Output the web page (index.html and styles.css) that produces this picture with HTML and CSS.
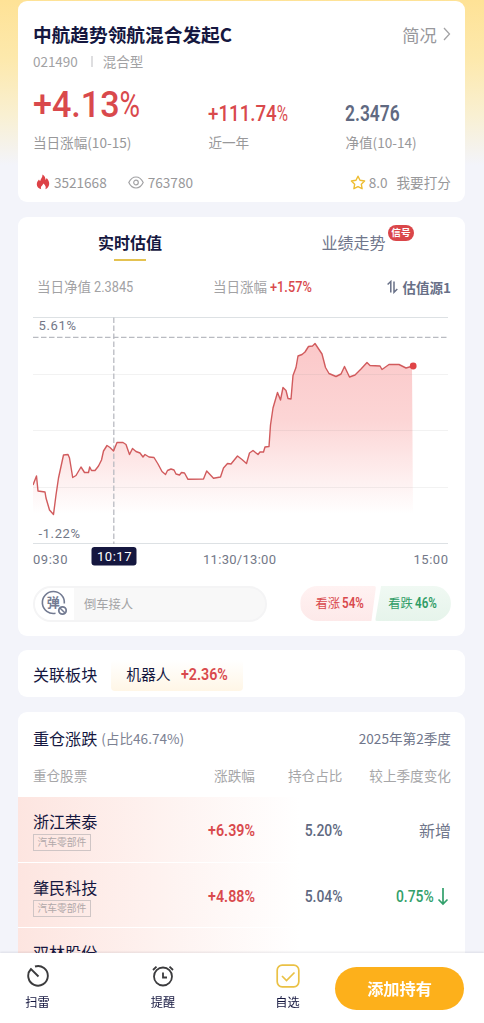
FILE: index.html
```html
<!DOCTYPE html>
<html lang="zh-CN">
<head>
<meta charset="utf-8">
<title>中航趋势领航混合发起C</title>
<link rel="stylesheet" href="styles.css">
</head>
<body>
<main class="page">
  <section class="card fund">
    <div class="fund-head"><h1>中航趋势领航混合发起C</h1>
      <a class="brief">简况<svg width="8" height="14" viewBox="0 0 8 14"><path d="M1 1l5.500 6L1 13" fill="none" stroke="#a3a3a5" stroke-width="1.300"/></svg></a></div>
    <div class="fund-meta"><span>021490</span><i></i><span>混合型</span></div>
    <div class="stats">
      <div><div class="val"><span class="din big red">+4.13<small>%</small></span></div><p>当日涨幅(10-15)</p></div>
      <div><div class="val"><span class="din mid red year">+111.74<small>%</small></span></div><p>近一年</p></div>
      <div><div class="val"><span class="din mid slate nav">2.3476</span></div><p>净值(10-14)</p></div>
    </div>
    <div class="counts">
      <svg class="fire" width="14" height="16" viewBox="0 0 14 16"><path d="M6.500.500C9 2 9.500 4 9.400 5.800C10.200 5.400 10.500 4.600 10.600 3.900C12.500 5.800 13.300 8 13.200 10C13 12.700 11.500 14.500 9.400 15.200C10.300 13.100 9.500 11.200 7.200 9.400C7 11.200 4.800 12 4.900 13.600C4.900 14.300 5 14.800 5.300 15.300C2.500 14.600.8 12.700.8 10.300C.8 8.200 2 6.700 3 5.500C3.300 6.300 3.600 6.800 4.200 7.100C4.600 4.800 6.700 3.400 6.500.5Z" fill="#dd4146"/></svg>
      <span>3521668</span>
      <svg class="eye" width="16" height="13" viewBox="0 0 16 13"><path d="M.8 6.500C2.500 3 5 1 8 1s5.500 2 7.200 5.500C13.500 10 11 12 8 12S2.500 10 .8 6.500Z" fill="none" stroke="#a2a2a4" stroke-width="1.200"/><circle cx="8" cy="6.500" r="2.300" fill="none" stroke="#a2a2a4" stroke-width="1.200"/></svg>
      <span>763780</span>
      <svg class="star" width="16" height="15" viewBox="0 0 16 15"><path d="M8 1.200l2 4.100 4.600.7-3.300 3.200.8 4.500L8 11.600l-4.100 2.100.8-4.500L1.400 6 6 5.300Z" fill="none" stroke="#eebd32" stroke-width="1.400" stroke-linejoin="round"/></svg>
      <span class="score">8.0</span><span>我要打分</span>
    </div>
  </section>

  <section class="card estimate">
    <nav class="tabs"><div class="active">实时估值</div><div>业绩走势<b class="badge">信号</b></div></nav>
    <div class="quote">
      <div>当日净值 <span class="din sm">2.3845</span></div>
      <div>当日涨幅 <span class="din sm red strong">+1.57%</span></div>
      <div class="source"><svg width="11" height="14" viewBox="0 0 11 14"><path d="M.6 4.500L3.800 1.500V12.500M7 1.500V12.300L10.300 9" fill="none" stroke="#687087" stroke-width="1.500"/></svg>估值源1</div>
    </div>
    <svg class="chart" width="420" height="256" viewBox="33 314 420 256">
      <defs><linearGradient id="fall" x1="0" y1="343" x2="0" y2="514" gradientUnits="userSpaceOnUse"><stop offset="0" stop-color="#fbc8c9"/><stop offset=".45" stop-color="#fcd5d5"/><stop offset="1" stop-color="#fff"/></linearGradient></defs>
      <path d="M33 485L36.500 476L38 491L45 492L46 498L49.500 510L53.500 514.500L56 495L58.500 478L63.500 455L68 454.500L69.500 458L72.700 477.500L76 475.500L81 467L84.500 472.500L88.500 472.500L89.700 467L91.500 470.500L95 470.500L98.500 466L101.500 460L103.500 451L107 445.500L110 447.500L113.500 451L117 442.500L123 442.500L126 444.500L129.500 454.500L132.500 448.500L136 451.500L140 453L143 457L145 454.500L149 457L154 457.500L158 464L162 471.500L165.500 474.500L167.500 470.500L171 469L174 470L176 474L179.500 475L181.500 472.500L184.500 473L188 479.300L203.500 479L206.700 471L213.500 478.300L220.500 477L223.500 468L227.500 463.500L231 464L237.500 456L242 459.500L246.500 463.500L249.500 453L253 450.500L258 454.500L260 452L263.500 452L265 447L269 446.500L270.500 425L273 408L277.500 392.500L280.500 400L283 387.500L286 390.500L288 398.500L291 399L293 375.500L296 367.500L298 356L302 354.500L305 352L308.500 346.500L312.500 346L315 343.500L319 349.500L322 354L325.500 367.500L329 373.500L336 376.500L341 374L344.500 366.500L349.500 377L355 375L361 369L367 362.500L370 365.500L380 366L382 369.500L389 364.500L399 364.500L406 368L412 366L413 514H33Z" fill="url(#fall)"/>
      <path d="M33 374.500H448M33 430.500H448M33 487.500H448" stroke="#808080" stroke-opacity=".1"/>
      <path d="M33 317.500H448M33 543.500H448" stroke="#dde1e4" stroke-width="1.200"/>
      <path d="M33 337.300H448" stroke="#b9bbc1" stroke-width="1.200" stroke-dasharray="5.500 2.500"/>
      <path d="M113.800 317.500V544" stroke="#b9bbc1" stroke-width="1.300" stroke-dasharray="5.500 2.500"/>
      <path d="M33 485L36.500 476L38 491L45 492L46 498L49.500 510L53.500 514.500L56 495L58.500 478L63.500 455L68 454.500L69.500 458L72.700 477.500L76 475.500L81 467L84.500 472.500L88.500 472.500L89.700 467L91.500 470.500L95 470.500L98.500 466L101.500 460L103.500 451L107 445.500L110 447.500L113.500 451L117 442.500L123 442.500L126 444.500L129.500 454.500L132.500 448.500L136 451.500L140 453L143 457L145 454.500L149 457L154 457.500L158 464L162 471.500L165.500 474.500L167.500 470.500L171 469L174 470L176 474L179.500 475L181.500 472.500L184.500 473L188 479.300L203.500 479L206.700 471L213.500 478.300L220.500 477L223.500 468L227.500 463.500L231 464L237.500 456L242 459.500L246.500 463.500L249.500 453L253 450.500L258 454.500L260 452L263.500 452L265 447L269 446.500L270.500 425L273 408L277.500 392.500L280.500 400L283 387.500L286 390.500L288 398.500L291 399L293 375.500L296 367.500L298 356L302 354.500L305 352L308.500 346.500L312.500 346L315 343.500L319 349.500L322 354L325.500 367.500L329 373.500L336 376.500L341 374L344.500 366.500L349.500 377L355 375L361 369L367 362.500L370 365.500L380 366L382 369.500L389 364.500L399 364.500L406 368L413 366" fill="none" stroke="#d15b5d" stroke-width="1.400" stroke-linejoin="round"/>
      <circle cx="413.200" cy="366" r="3.400" fill="#e04447"/>
      <rect x="91.500" y="547" width="45" height="18.500" rx="3" fill="#15173f"/>
      <g class="axis">
        <text x="38.500" y="330" textLength="37.500">5.61%</text><text x="38.500" y="538" textLength="41.500">-1.22%</text>
        <text x="33" y="564" textLength="34.500">09:30</text><text x="97" y="560.500" textLength="34.500" class="cursor">10:17</text>
        <text x="203" y="564" textLength="73">11:30/13:00</text><text x="413.500" y="564" textLength="34.500">15:00</text>
      </g>
    </svg>
    <div class="vote-row">
      <div class="comment"><span class="danmu"><svg width="28" height="26" viewBox="0 0 28 26"><path d="M23.300 13.500A11 11 0 1 0 14.500 23.300" fill="none" stroke="#737b92" stroke-width="1.600"/><text x="5.800" y="17">弹</text><circle cx="21.500" cy="20.500" r="3.700" fill="#fff" stroke="#737b92" stroke-width="1.800"/><path d="M19 18l5 5" stroke="#737b92" stroke-width="1.500"/></svg></span><span>倒车接人</span></div>
      <div class="votes">
        <div class="vote up">看涨<span class="din v">54%</span></div>
        <div class="vote down">看跌<span class="din v">46%</span></div>
      </div>
    </div>
  </section>

  <section class="card sector"><h2>关联板块</h2><div class="chip">机器人<span class="din row red">+2.36%</span></div></section>

  <section class="card holdings">
    <div class="hold-head"><h2>重仓涨跌</h2><span>(占比46.74%)</span><em>2025年第2季度</em></div>
    <div class="grid labels"><span>重仓股票</span><span>涨跌幅</span><span>持仓占比</span><span>较上季度变化</span></div>
    <div class="grid stock"><div class="name">浙江荣泰<small>汽车零部件</small></div><span class="din row right red">+6.39%</span><span class="din row right slate thin">5.20%</span><span class="change">新增</span></div>
    <div class="grid stock"><div class="name">肇民科技<small>汽车零部件</small></div><span class="din row right red">+4.88%</span><span class="din row right slate thin">5.04%</span><span class="change green"><span class="din row right thin">0.75%</span><svg width="12" height="19" viewBox="0 0 12 19"><path d="M6 1V17M1.500 12.500L6 17L10.500 12.500" fill="none" stroke="#32a06b" stroke-width="1.700"/></svg></span></div>
    <div class="grid stock"><div class="name">双林股份<small>汽车零部件</small></div></div>
  </section>
</main>

<footer class="bar">
  <a><svg width="24" height="24" viewBox="0 0 24 24" fill="none" stroke="#3b3b3d" stroke-width="1.900"><path d="M9 2.500A9.800 9.800 0 1 1 5 5L12.500 12.500"/></svg>扫雷</a>
  <a><svg width="24" height="24" viewBox="0 0 24 24" fill="none" stroke="#3b3b3d" stroke-width="1.800"><circle cx="12" cy="12.500" r="9"/><path d="M12 8.500V13.500H16M2 6L5.500 2.700M18.500 2.700L22 6"/></svg>提醒</a>
  <a><svg width="24" height="24" viewBox="0 0 24 24" fill="none" stroke="#eac145" stroke-width="1.700"><rect x="1.200" y="1.200" width="21.600" height="21.600" rx="5"/><path d="M6 12L10.500 16.500L18.500 8.500"/></svg>自选</a>
  <button>添加持有</button>
</footer>
</body>
</html>
```
FILE: styles.css
```css
* { box-sizing: border-box; }
body { margin: 0; height: 1023px; overflow: hidden; font-family: "Noto Sans CJK SC", sans-serif; color: #15173f; background: #f3f4fa; }
h1, h2, p { margin: 0; }
.page { height: 1023px; overflow: hidden; padding: 1px 18.400px 0; display: flex; flex-direction: column; gap: 14.500px;
  background: linear-gradient(#fee296 0, #fde9ad 60px, #f9f0d2 115px, #f3f4fa 165px); }
.card { flex: none; width: 447px; background: #fff; border-radius: 9px; padding: 0 14.500px; }
.red { color: #d9494c; } .slate { color: #606981; } .green { color: #32a06b; }

/* Condensed numerals */
.din { display: inline-block; font-family: Roboto, sans-serif; font-weight: 600; white-space: nowrap; transform: scaleX(.82); transform-origin: left center; }
.din small { font-size: 1em; font-weight: 400; display: inline-block; transform: scaleX(.82); transform-origin: left center; }
.big { font-size: 37.500px; font-weight: 500; line-height: 40px; transform: scaleX(.91); }
.mid { font-size: 21.500px; line-height: 24px; }
.year { font-weight: 500; transform: scaleX(.87); } .nav { transform: scaleX(.81); }
.sm { font-size: 14.500px; font-weight: 400; line-height: 20px; transform: scaleX(.88); }
.strong { font-weight: 500; }
.v { font-size: 15.500px; transform: scaleX(.75); }
.row { font-size: 17.200px; transform: scaleX(.83); }
.right { transform-origin: right center; }
.thin { font-weight: 500; transform: scaleX(.81); }

.fund { height: 201px; padding-top: 16px; }
.fund-head { display: flex; justify-content: space-between; height: 34px; align-items: center; }
h1 { font-size: 18.700px; font-weight: 600; line-height: 34px; }
.brief { display: flex; align-items: center; gap: 6px; font-size: 17.300px; color: #98989c; }
.fund-meta { display: flex; align-items: center; height: 20px; font-size: 13.500px; color: #a2a2a4; }
.fund-meta i { width: 2px; height: 11px; background: #dedee0; margin: 0 10px 0 13px; }
.stats { display: grid; grid-template-columns: 175.500px 137px 1fr; margin-top: 13px; }
.stats .val { height: 40px; display: flex; align-items: center; }
.stats .mid { margin-top: 20px; }
.stats p { font-size: 13.600px; line-height: 20px; margin-top: 8px; color: #98989a; white-space: nowrap; }
.counts { display: flex; align-items: center; height: 20px; margin-top: 20px; font-size: 13.600px; color: #98989a; }
.fire { margin: 0 4px 0 3px; } .eye { margin: 0 4px 0 21px; } .star { margin: 0 3px 0 auto; } .score { margin-right: 9px; }

.estimate { height: 419px; }
.tabs { display: grid; grid-template-columns: 194px 1fr; height: 59px; padding-top: 9px; line-height: 33px; font-size: 16px; color: #6f768b; text-align: center; }
.tabs div:last-child { padding-left: 29px; position: relative; }
.active { font-weight: 600; color: #15173f; }
.active::after { content: ""; display: block; width: 32px; height: 2px; background: #e4c251; margin: 0 auto; }
.badge { position: absolute; left: 161px; top: -1px; width: 26px; height: 16px; border-radius: 8px; background: #da4649; color: #fff; font-size: 9.600px; line-height: 15px; }
.quote { display: grid; grid-template-columns: 176px 1fr auto; height: 20px; line-height: 20px; font-size: 13.500px; color: #a2a2a4; padding-left: 4px; }
.source { display: flex; align-items: center; gap: 4px; color: #687087; font-weight: 600; }
.chart { display: block; margin-top: 18px; }
.axis { font-family: Roboto, sans-serif; font-size: 13px; fill: #737887; }
.axis .cursor { fill: #fff; }
.vote-row { display: flex; justify-content: space-between; height: 36px; margin-top: 16px; }
.comment { display: flex; align-items: center; width: 234px; border: 2px solid #f4f4f5; border-radius: 18px; background: #f8f8f8; overflow: hidden; font-size: 12.300px; color: #a4a4a6; }
.danmu { width: 39px; height: 32px; background: #fff; padding: 2px 0 0 6px; margin-right: 10px; }
.danmu svg { display: block; }
.danmu text { font-size: 13px; font-weight: 700; fill: #737b92; }
.votes { display: flex; width: 150.500px; }
.vote { width: 77px; padding-left: 15px; font-size: 12.300px; line-height: 35px; height: 35.500px; white-space: nowrap; }
.vote .din { margin-left: 2px; }
.up { color: #d9494c; background: linear-gradient(#fff2f2, #fde9e9); border-radius: 18px 2px 2px 18px; clip-path: polygon(0 0, 100% 0, 71px 100%, 0 100%); }
.down { color: #2f9c66; background: linear-gradient(#f0f9f3, #e6f4eb); border-radius: 2px 18px 18px 2px; margin-left: -1px; padding-left: 13px; clip-path: polygon(6px 0, 100% 0, 100% 100%, 0 100%); }

.sector { height: 47px; display: flex; align-items: center; }
h2 { font-size: 16.100px; font-weight: 400; line-height: 24px; }
.chip { width: 132px; height: 31px; margin: 4px 0 0 14px; padding-left: 15px; font-size: 14.800px; line-height: 27px; border-radius: 4px; background: linear-gradient(#fff, #fff6e6); white-space: nowrap; }
.chip .din { margin-left: 10px; }

.holdings { height: 330px; padding: 0; }
.hold-head { display: flex; align-items: center; height: 53.500px; padding: 0 14.500px; font-size: 13.600px; color: #7c8293; }
.hold-head h2 { color: #15173f; }
.hold-head span { margin-left: 4px; }
.hold-head em { font-style: normal; margin-left: auto; color: #6f768b; }
.grid { display: grid; grid-template-columns: 110px 112px 87.500px 108.500px; padding: 0 14.500px; text-align: right; }
.grid > :first-child { text-align: left; }
.labels { height: 32px; line-height: 20px; font-size: 13.600px; color: #a6a6a8; }
.stock { height: 65.500px; border-bottom: 1.500px solid #fff; line-height: 67px; background: linear-gradient(90deg, #fde5e0, #fff 63%); background-clip: padding-box; }
.stock .name { font-size: 16.100px; line-height: 24px; padding-top: 12px; }
.name small { display: block; width: 58px; height: 17px; margin-top: 1px; border: 1px solid #cfc5c5; font-size: 9.800px; line-height: 15px; text-align: center; color: #b0a8a9; }
.change { font-size: 16px; color: #6f768b; }
.change.green { color: #32a06b; display: flex; justify-content: flex-end; align-items: center; gap: 3px; padding-right: 2px; }

.bar { position: fixed; left: 0; right: 0; bottom: 0; height: 70px; background: #fff; box-shadow: 0 -1px 2px rgba(30,30,60,.1); display: grid; grid-template-columns: 75px 176px 73px 1fr; }
.bar a { display: flex; flex-direction: column; align-items: center; padding-top: 11px; font-size: 12.200px; line-height: 18px; gap: 5px; }
.bar button { width: 129px; height: 43px; margin: 14px 0 0 11px; border: 0; border-radius: 22px; background: #fdb01b; color: #fff; font: 600 16.200px/43px "Noto Sans CJK SC", sans-serif; padding: 0; }
```
